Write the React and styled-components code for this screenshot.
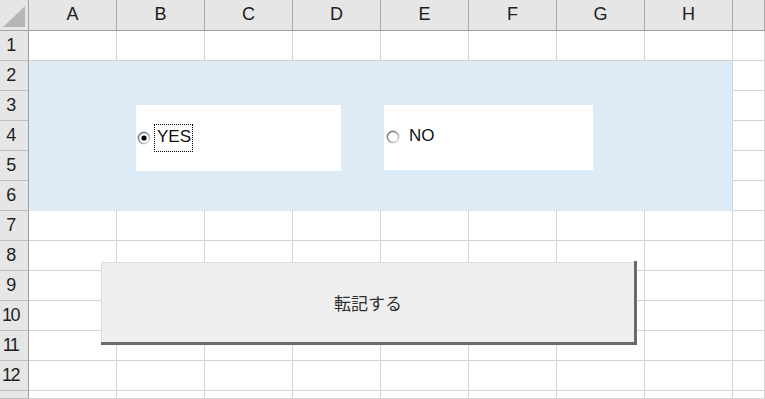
import React from "react";
import styled, { createGlobalStyle } from "styled-components";

const COLUMNS = ["A", "B", "C", "D", "E", "F", "G", "H"];
const ROWS = 13;
const VISIBLE_ROWS = 12;
const FILL = "#ddebf7";

const isFilled = (row, col) => row >= 2 && row <= 6 && col <= 7;

const GlobalStyle = createGlobalStyle`
  html, body {
    margin: 0;
    padding: 0;
    background: #fff;
  }
  body {
    font-family: "Liberation Sans", Arial, sans-serif;
    overflow: hidden;
  }
`;

const Sheet = styled.div`
  position: relative;
  width: 765px;
  height: 399px;
  overflow: hidden;
  display: grid;
  grid-template-columns: 29px repeat(8, 88px) 1fr;
  grid-template-rows: 31px repeat(12, 30px) 1fr;
`;

const Corner = styled.div`
  position: relative;
  background: #e6e6e6;
  border-right: 1px solid #a6a6a6;
  border-bottom: 1px solid #a6a6a6;

  &::after {
    content: "";
    position: absolute;
    left: 3px;
    top: 6px;
    width: 22px;
    height: 21px;
    background: #b6b6b6;
    clip-path: polygon(100% 0, 100% 100%, 0 100%);
  }
`;

const ColHeader = styled.div`
  box-sizing: border-box;
  background: #e6e6e6;
  border-right: 1px solid #ababab;
  border-bottom: 1px solid #9e9e9e;
  display: flex;
  align-items: center;
  justify-content: center;
  font-size: 18px;
  color: #1e1e1e;
  padding-bottom: 1px;
`;

const RowHeader = styled.div`
  box-sizing: border-box;
  background: #e6e6e6;
  border-right: 1px solid #9e9e9e;
  border-bottom: 1px solid #bdbdbd;
  display: flex;
  align-items: center;
  justify-content: center;
  padding-right: 7px;
  font-size: 18px;
  letter-spacing: -1.5px;
  color: #1e1e1e;
`;

const Cell = styled.div`
  box-sizing: border-box;
  background: ${({ $fill }) => ($fill ? FILL : "#fff")};
  border-right: 1px solid
    ${({ $fill, $edge }) => ($fill && !$edge ? FILL : "#d4d4d4")};
  border-bottom: 1px solid ${({ $fill }) => ($fill ? FILL : "#d4d4d4")};
`;

const Frame = styled.div`
  position: absolute;
  left: ${({ $left }) => $left}px;
  top: ${({ $top }) => $top}px;
  width: ${({ $width }) => $width}px;
  height: ${({ $height }) => $height}px;
  background: #fff;
  display: flex;
  align-items: center;
  padding-left: ${({ $pad }) => $pad}px;
  box-sizing: border-box;
`;

const Option = styled.div`
  display: flex;
  align-items: center;
  gap: ${({ $gap }) => $gap}px;
  margin-top: ${({ $shift }) => $shift}px;
`;

const Label = styled.span`
  box-sizing: border-box;
  height: 28px;
  padding: 0 1px 3px 2px;
  display: flex;
  align-items: center;
  font-size: 17px;
  color: #111;
  border: 1px dotted ${({ $focused }) => ($focused ? "#000" : "transparent")};
`;

const ButtonFace = styled.div`
  position: absolute;
  left: 101px;
  top: 262px;
  width: 533px;
  height: 80px;
  box-sizing: border-box;
  background: #efefef;
  border-top: 1px solid #dcdcdc;
  border-left: 1px solid #dcdcdc;
  display: flex;
  align-items: center;
  justify-content: center;
  font-family: "Noto Sans CJK JP", "Liberation Sans", sans-serif;
  font-size: 17px;
  color: #2e2e2e;

  &::before {
    content: "";
    position: absolute;
    left: -1px;
    right: -3px;
    bottom: -3px;
    height: 3px;
    background: #6a6a6a;
  }

  &::after {
    content: "";
    position: absolute;
    top: -2px;
    right: -3px;
    bottom: -3px;
    width: 3px;
    background: #6a6a6a;
  }
`;

const Radio = ({ checked }) => (
  <svg width="14" height="14" viewBox="0 0 14 14">
    <defs>
      <linearGradient id="ring" x1="0" y1="0" x2="1" y2="1">
        <stop offset="0" stopColor="#6e6e6e" />
        <stop offset="0.5" stopColor="#9a9a9a" />
        <stop offset="1" stopColor="#ececec" />
      </linearGradient>
    </defs>
    <circle cx="7" cy="7" r="5.6" fill="#fff" stroke="url(#ring)" strokeWidth="1.6" />
    {checked && <circle cx="7" cy="7" r="2.6" fill="#000" />}
  </svg>
);

const App = () => {
  const cells = [];
  for (let r = 1; r <= ROWS; r++) {
    cells.push(<RowHeader key={`h${r}`}>{r <= VISIBLE_ROWS ? r : ""}</RowHeader>);
    for (let c = 0; c <= 8; c++) {
      cells.push(
        <Cell key={`${r}-${c}`} $fill={isFilled(r, c)} $edge={c === 7} />
      );
    }
  }

  return (
    <>
      <GlobalStyle />
      <Sheet>
        <Corner />
        {COLUMNS.map((col) => (
          <ColHeader key={col}>{col}</ColHeader>
        ))}
        <ColHeader />
        {cells}

        <Frame $left={136} $top={105} $width={205} $height={66} $pad={1}>
          <Option $gap={3} $shift={0}>
            <Radio checked />
            <Label $focused>YES</Label>
          </Option>
        </Frame>

        <Frame $left={384} $top={105} $width={209} $height={65} $pad={2}>
          <Option $gap={6} $shift={-1}>
            <Radio />
            <Label>NO</Label>
          </Option>
        </Frame>

        <ButtonFace>転記する</ButtonFace>
      </Sheet>
    </>
  );
};

export default App;
